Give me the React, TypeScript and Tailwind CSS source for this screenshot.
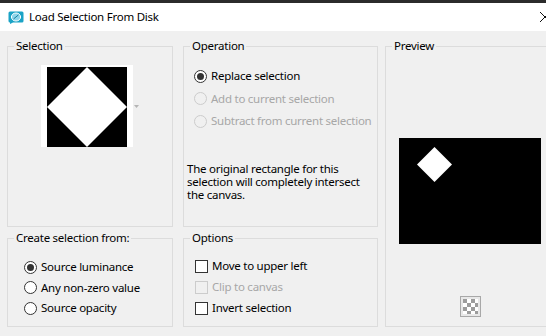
import React from "react";

const font = { fontFamily: '"Noto Sans", "Open Sans", sans-serif' };

function Radio({ checked, disabled, label }: { checked?: boolean; disabled?: boolean; label: string }) {
  return (
    <div className="flex items-center h-[16px]">
      <div
        className={
          "w-[13px] h-[13px] rounded-full border flex items-center justify-center shrink-0 " +
          (disabled ? "border-[#cccccc] bg-[#f0f0f0]" : "border-[#333333] bg-white")
        }
      >
        {checked && <div className="w-[7px] h-[7px] rounded-full bg-[#333333]" />}
      </div>
      <span className={"ml-[4px] whitespace-nowrap " + (disabled ? "text-[#a7a7a7]" : "text-black")}>{label}</span>
    </div>
  );
}

function Check({ disabled, label }: { disabled?: boolean; label: string }) {
  return (
    <div className="flex items-center h-[16px]">
      <div
        className={
          "w-[13px] h-[13px] border shrink-0 " +
          (disabled ? "border-[#cccccc] bg-[#f0f0f0]" : "border-[#333333] bg-white")
        }
      />
      <span className={"ml-[4px] whitespace-nowrap " + (disabled ? "text-[#a7a7a7]" : "text-black")}>{label}</span>
    </div>
  );
}

function Group({ title, className, children }: { title: string; className: string; children?: React.ReactNode }) {
  return (
    <div className={"relative border border-[#dcdcdc] " + className}>
      <div className="absolute -top-[9px] left-[6px] px-[2px] bg-[#f0f0f0] leading-[16px] text-black whitespace-nowrap">
        {title}
      </div>
      {children}
    </div>
  );
}

export default function App() {
  return (
    <div className="w-[546px] h-[336px] overflow-hidden bg-[#f0f0f0] text-[11.5px] tracking-[-0.25px] leading-[16px]" style={font}>
      <div className="h-[3px] bg-[#2b2b2b]" />
      <div className="h-[28px] bg-white flex items-center relative">
        <svg className="ml-[8px] mt-[1px]" width="16" height="13" viewBox="0 0 16 13">
          <path d="M2 0.5 H14 A1.5 1.5 0 0 1 15.5 2 V10 A1.5 1.5 0 0 1 14 11.5 H5 L2 13 V11.5 A1.5 1.5 0 0 1 0.5 10 V2 A1.5 1.5 0 0 1 2 0.5 Z" fill="#1ba3c6" />
          <ellipse cx="8" cy="6" rx="4.6" ry="4" fill="#8cd5ea" stroke="#ffffff" strokeWidth="1" />
          <path d="M5.5 8 L10.5 3.8" stroke="#1b7f9c" strokeWidth="1" />
        </svg>
        <span className="ml-[5px] text-black whitespace-nowrap">Load Selection From Disk</span>
        <svg className="absolute left-[539px] top-[8px]" width="12" height="12" viewBox="0 0 12 12">
          <path d="M1 1 L11 11 M11 1 L1 11" stroke="#111" strokeWidth="1" />
        </svg>
      </div>
      <div className="flex pl-[7px] pt-[15px]">
        <div className="flex flex-col gap-[11px] w-[166px] shrink-0">
          <Group title="Selection" className="h-[181px]">
            <div className="flex items-start ml-[33px] mt-[18px]">
              <div className="w-[92px] h-[82px] bg-white pl-[6px] pt-[2px]">
                <svg width="80" height="80" viewBox="0 0 80 80">
                  <rect width="80" height="80" fill="#000" />
                  <polygon points="40,0 80,40 40,80 0,40" fill="#fff" />
                </svg>
              </div>
              <svg className="ml-[1px] mt-[40px]" width="5" height="3" viewBox="0 0 5 3">
                <polygon points="0,0 5,0 2.5,3" fill="#b5b5b5" />
              </svg>
            </div>
          </Group>
          <Group title="Create selection from:" className="h-[89px]">
            <div className="flex flex-col gap-[4.5px] pl-[16px] pt-[20px]">
              <Radio checked label="Source luminance" />
              <Radio label="Any non-zero value" />
              <Radio label="Source opacity" />
            </div>
          </Group>
        </div>
        <div className="flex flex-col gap-[11px] w-[195px] shrink-0 ml-[10px]">
          <Group title="Operation" className="h-[181px]">
            <div className="flex flex-col gap-[6.5px] pl-[10px] pt-[21px]">
              <Radio checked label="Replace selection" />
              <Radio disabled label="Add to current selection" />
              <Radio disabled label="Subtract from current selection" />
            </div>
            <p className="pl-[3px] pt-[33px] leading-[13px] text-black w-[182px]">
              The original rectangle for this selection will completely intersect the canvas.
            </p>
          </Group>
          <Group title="Options" className="h-[89px]">
            <div className="flex flex-col gap-[5px] pl-[11px] pt-[19px]">
              <Check label="Move to upper left" />
              <Check disabled label="Clip to canvas" />
              <Check label="Invert selection" />
            </div>
          </Group>
        </div>
        <Group title="Preview" className="w-[170px] h-[281px] shrink-0 ml-[7px]">
          <div className="flex flex-col items-center">
            <div className="mt-[91px] ml-[-1px] w-[142px] h-[106px] bg-black">
              <svg width="142" height="106" viewBox="0 0 142 106">
                <polygon points="35.5,9 53,26.5 35.5,44 18,26.5" fill="#fff" />
              </svg>
            </div>
            <div className="mt-[52px] w-[21px] h-[21px] border border-[#a8a8a8] bg-[#e8e8e8] flex items-center justify-center">
              <svg width="15" height="15" viewBox="0 0 15 15">
                <rect width="15" height="15" fill="#ffffff" />
                <rect x="0" y="0" width="4" height="4" fill="#9c9c9c" />
                <rect x="8" y="0" width="4" height="4" fill="#9c9c9c" />
                <rect x="4" y="4" width="4" height="4" fill="#9c9c9c" />
                <rect x="12" y="4" width="3" height="4" fill="#9c9c9c" />
                <rect x="0" y="8" width="4" height="4" fill="#9c9c9c" />
                <rect x="8" y="8" width="4" height="4" fill="#9c9c9c" />
                <rect x="4" y="12" width="4" height="3" fill="#9c9c9c" />
                <rect x="12" y="12" width="3" height="3" fill="#9c9c9c" />
              </svg>
            </div>
          </div>
        </Group>
      </div>
    </div>
  );
}
